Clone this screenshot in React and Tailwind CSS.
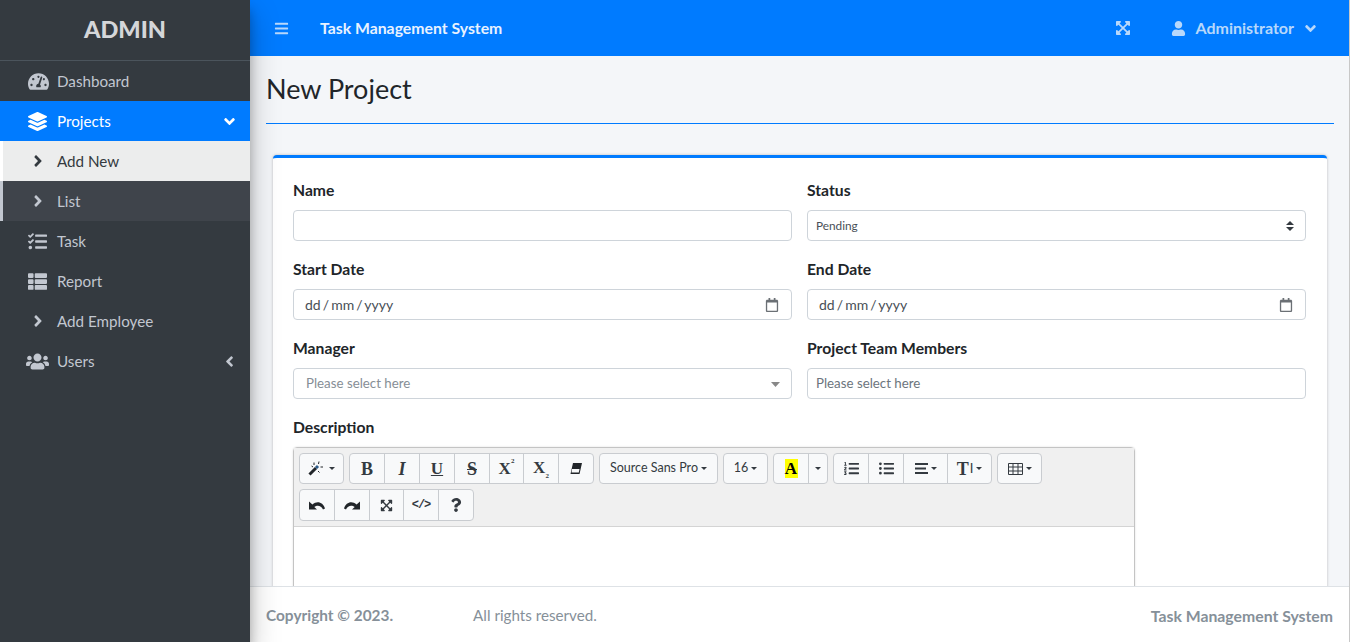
import React from "react";
import { FaTachometerAlt, FaLayerGroup, FaAngleRight, FaAngleDown, FaAngleLeft, FaTasks, FaThList, FaUsers, FaBars, FaExpandArrowsAlt, FaUser, FaListOl, FaListUl, FaQuestion, FaRegCalendar } from "react-icons/fa";

const font = "font-['Lato','Noto_Sans',sans-serif]";
const serif = "font-['Liberation_Serif',serif] font-bold";

function NavItem({ icon, label, active, right, sub, current }) {
  let cls = "text-[#c2c7d0]";
  if (active) cls = "bg-[#007bff] text-white";
  if (sub) cls = current ? "bg-[#eceded] text-[#343a40] border-l-[3px] border-white" : "bg-[#3f444b] text-[#c2c7d0] border-l-[3px] border-[#c2c7d0]";
  return (
    <div className={`h-10 flex items-center text-[15.2px] ${sub ? "pl-[25px]" : "pl-7"} pr-[12px] ${cls}`}>
      <span className="w-[29px] flex items-center text-[19px]">{icon}</span>
      <span className="flex-1">{label}</span>
      {right}
    </div>
  );
}

function Field({ label, children }) {
  return (
    <div className="flex-1 min-w-0">
      <div className="h-[20px] mb-[10px] text-[15.7px] font-bold text-[#212529] leading-5">{label}</div>
      {children}
    </div>
  );
}

function Box({ children, className = "" }) {
  return <div className={`h-[31px] bg-white border border-[#ced4da] rounded-[4px] flex items-center ${className}`}>{children}</div>;
}

function Group({ children, tall }) {
  return <div className={`flex ${tall ? "h-[32px]" : "h-[31px]"} border border-[#c9ccd0] rounded-[4px] bg-[#f8f9fa] divide-x divide-[#c9ccd0] text-[#343a40]`}>{children}</div>;
}

function Btn({ children, w = "w-[35px]" }) {
  return <div className={`${w} flex items-center justify-center gap-[3px] text-[14px]`}>{children}</div>;
}

const Caret = () => (
  <svg width="6" height="3" viewBox="0 0 6 3" fill="currentColor"><path d="M0 0H6L3 3Z" /></svg>
);

export default function App() {
  return (
    <div className={`flex h-screen overflow-hidden bg-[#f4f6f9] ${font}`}>
      <aside className="w-[250px] shrink-0 bg-[#343a40] shadow-[0_14px_28px_rgba(0,0,0,0.25),0_10px_10px_rgba(0,0,0,0.22)] z-10">
        <div className="h-[61px] border-b border-[#4b545c] flex items-center justify-center text-[23.5px] font-black text-[#d4d6d9]">ADMIN</div>
        <NavItem icon={<FaTachometerAlt className="text-[21px]" />} label="Dashboard" />
        <NavItem icon={<FaLayerGroup />} label="Projects" active right={<FaAngleDown className="text-[17px]" />} />
        <NavItem sub current icon={<FaAngleRight className="text-[18px] ml-px" />} label="Add New" />
        <NavItem sub icon={<FaAngleRight className="text-[18px] ml-px" />} label="List" />
        <NavItem icon={<FaTasks />} label="Task" />
        <NavItem icon={<FaThList />} label="Report" />
        <NavItem icon={<FaAngleRight className="text-[18px] ml-px" />} label="Add Employee" />
        <NavItem icon={<FaUsers className="text-[23px] -ml-[2px]" />} label="Users" right={<FaAngleLeft className="text-[17px]" />} />
      </aside>

      <div className="flex-1 min-w-0 flex flex-col">
        <header className="h-14 shrink-0 bg-[#007bff] flex items-center text-[#b8d8fb] font-bold text-base">
          <FaBars className="ml-6 text-[15px]" />
          <span className="ml-[31px] text-[15.8px] text-[#e8f2ff] flex-1">Task Management System</span>
          <FaExpandArrowsAlt className="text-[16px]" />
          <FaUser className="ml-[40px] text-[15px]" />
          <span className="ml-[10px]">Administrator</span>
          <FaAngleDown className="ml-[7.5px] mr-[30.5px] text-[17px]" />
        </header>

        <main className="flex-1 min-h-0 overflow-hidden pl-4 pr-[15px]">
          <h1 className="h-[68px] border-b border-[#007bff] text-[27px] leading-[66px] text-[#212529]">New Project</h1>
          <div className="mt-[31px] ml-[7px] mr-[7px] bg-white border-t-[3px] border-[#007bff] rounded-[4px] shadow-[0_0_3px_rgba(0,0,0,0.25)] pl-5 pr-[21px] pt-[22px] h-[600px]">
            <div className="flex gap-[15px] mb-[18px]">
              <Field label="Name"><Box /></Field>
              <Field label="Status">
                <Box className="px-2 justify-between text-[11.8px] text-[#495057]">
                  <span>Pending</span>
                  <svg width="10" height="14" viewBox="0 0 10 14" fill="#343a40" className="mr-[2px]"><path d="M1 6 L5 2 L9 6Z M1 8 L5 12 L9 8Z" /></svg>
                </Box>
              </Field>
            </div>
            <div className="flex gap-[15px] mb-[18px]">
              {["Start Date", "End Date"].map((l) => (
                <Field key={l} label={l}>
                  <Box className="pl-[11px] pr-[12px] justify-between text-[14px] text-[#495057]">
                    <span className="[word-spacing:-1.5px]">dd / mm / yyyy</span>
                    <FaRegCalendar className="text-[14px] text-[#6b7075]" />
                  </Box>
                </Field>
              ))}
            </div>
            <div className="flex gap-[15px] mb-[18px]">
              <Field label="Manager">
                <Box className="pl-3 pr-[11px] pt-px justify-between text-[13.3px] text-[#868e96]">
                  <span>Please select here</span>
                  <svg width="9" height="5" viewBox="0 0 9 5" fill="#888"><path d="M0 0H9L4.5 5Z" /></svg>
                </Box>
              </Field>
              <Field label="Project Team Members">
                <Box className="px-2 text-[13.3px] text-[#6c757d]"><span>Please select here</span></Box>
              </Field>
            </div>
            <div className="h-[20px] mb-[10px] text-[15.7px] font-bold text-[#212529] leading-5">Description</div>
            <div className="w-[842px] border border-[#c4c4c4] rounded-[4px] shadow-[0_0_2px_rgba(0,0,0,0.15)]">
              <div className="bg-[#f0f0f0] border-b border-[#d4d4d4] pl-[5px] pt-[5px] h-[79px] flex flex-col gap-[5px]">
                <div className="flex gap-[5px]">
                  <Group>
                    <Btn w="w-[43px]">
                      <svg width="18" height="15" viewBox="0 0 18 15" fill="none" stroke="#212529">
                        <path d="M1.5 13.5L8 7" strokeWidth="3" />
                        <path d="M8 7L10 5" strokeWidth="3" stroke="#2d5c8a" />
                        <path d="M6 1.5V4M11 .5L10.5 3M12.5 6H15M3.5 5L5 6M10 10L11.5 11.5" strokeWidth="1" />
                      </svg>
                      <Caret />
                    </Btn>
                  </Group>
                  <Group>
                    <Btn><span className={`${serif} text-[18px] leading-none`}>B</span></Btn>
                    <Btn><span className={`${serif} italic text-[18px] leading-none`}>I</span></Btn>
                    <Btn><span className={`${serif} underline text-[17px] leading-none`}>U</span></Btn>
                    <Btn><span className={`${serif} line-through text-[18px] leading-none`}>S</span></Btn>
                    <Btn w="w-[34px]"><span className={`${serif} text-[17px] leading-none`}>X<sup className="text-[7px] align-[8px] leading-none">2</sup></span></Btn>
                    <Btn><span className={`${serif} text-[17px] leading-none`}>X<sub className="text-[7px] align-[-3px] leading-none">2</sub></span></Btn>
                    <Btn w="w-[34px]">
                      <svg width="12" height="11" viewBox="0 0 12 11"><path d="M3 0H12L9.5 11H0.5Z" fill="#212529" /><path d="M2 6H9.5L8.8 9.5H1.6Z" fill="#f8f9fa" /></svg>
                    </Btn>
                  </Group>
                  <Group><Btn w="w-[117px]"><span className="text-[12.5px]">Source Sans Pro</span><Caret /></Btn></Group>
                  <Group><Btn w="w-[43px]"><span className="text-[12.5px]">16</span><Caret /></Btn></Group>
                  <Group>
                    <Btn><span className={`bg-[#ffff00] w-[13px] h-[19px] flex items-center justify-center text-black ${serif} text-[17px] leading-none`}>A</span></Btn>
                    <Btn w="w-[18px]"><Caret /></Btn>
                  </Group>
                  <Group>
                    <Btn><FaListOl className="text-[15px]" /></Btn>
                    <Btn><FaListUl className="text-[15px]" /></Btn>
                    <Btn w="w-[44px]">
                      <svg width="13" height="11" viewBox="0 0 13 11" fill="currentColor"><path d="M0 0H13V2H0ZM0 4.5H11V6.5H0ZM0 9H13V11H0Z" /></svg>
                      <Caret />
                    </Btn>
                    <Btn w="w-[43px]"><span className={`${serif} text-[18px] leading-none`}>T</span><span className="text-[13px] leading-none -ml-[2px]">I</span><Caret /></Btn>
                  </Group>
                  <Group>
                    <Btn w="w-[43px]">
                      <svg width="15" height="12" viewBox="0 0 15 12" fill="none" stroke="#343a40" strokeWidth="1"><path d="M.5.5H14.5V11.5H.5ZM.5 4H14.5M.5 8H14.5M5 .5V11.5M10 .5V11.5" /></svg>
                      <Caret />
                    </Btn>
                  </Group>
                </div>
                <div className="flex">
                  <Group tall>
                    <Btn>
                      <svg width="16" height="10" viewBox="0 0 16 10" fill="#212529"><path d="M0 1.5V9.5H8L5.3 7C8 4.8 12 5 14 9.5L16 8.5C14 2 8 .5 3.4 4.5Z" /></svg>
                    </Btn>
                    <Btn>
                      <svg width="16" height="10" viewBox="0 0 16 10" fill="#212529"><path d="M16 1.5V9.5H8L10.7 7C8 4.8 4 5 2 9.5L0 8.5C2 2 8 .5 12.6 4.5Z" /></svg>
                    </Btn>
                    <Btn w="w-[34px]"><FaExpandArrowsAlt className="text-[13px]" /></Btn>
                    <Btn><span className="text-[12px] font-bold font-['Liberation_Mono',monospace] tracking-[-1px]">&lt;/&gt;</span></Btn>
                    <Btn w="w-[34px]"><FaQuestion className="text-[14px]" /></Btn>
                  </Group>
                </div>
              </div>
              <div className="h-[200px] bg-white" />
            </div>
          </div>
        </main>

        <footer className="h-14 shrink-0 bg-white border-t border-[#dee2e6] flex items-center justify-between px-4 pt-[2px] text-[#869099]">
          <div><span className="font-bold text-[15.4px]">Copyright © 2023.</span><span className="ml-[80px] text-[15.2px]">All rights reserved.</span></div>
          <span className="font-bold text-[15.8px]">Task Management System</span>
        </footer>
      </div>
      <div className="w-px shrink-0 bg-[#c8c8c8]" />
    </div>
  );
}
